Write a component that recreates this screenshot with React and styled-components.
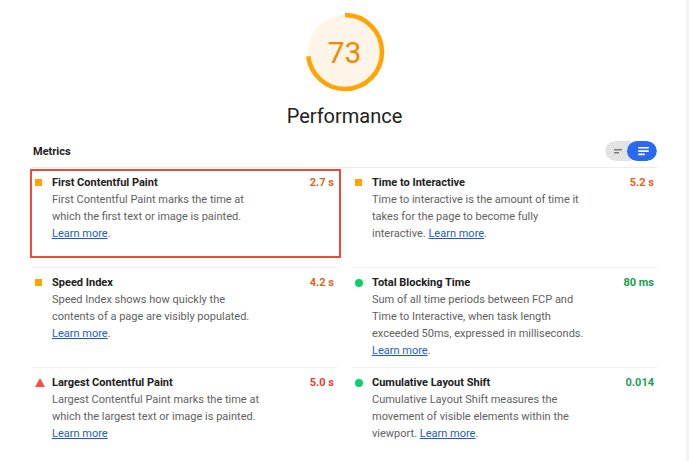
import React from "react";
import styled, { createGlobalStyle } from "styled-components";

const GlobalStyle = createGlobalStyle`
  html, body {
    margin: 0;
    padding: 0;
    background: #fff;
  }
  body {
    font-family: Roboto, "Liberation Sans", Arial, sans-serif;
    color: #212121;
    -webkit-font-smoothing: antialiased;
  }
`;

const metrics = [
  {
    id: "fcp",
    title: "First Contentful Paint",
    value: "2.7 s",
    rating: "average",
    text: "First Contentful Paint marks the time at which the first text or image is painted.",
    dot: true,
    highlight: true,
  },
  {
    id: "tti",
    title: "Time to Interactive",
    value: "5.2 s",
    rating: "average",
    text: "Time to interactive is the amount of time it takes for the page to become fully interactive.",
    dot: true,
  },
  {
    id: "si",
    title: "Speed Index",
    value: "4.2 s",
    rating: "average",
    text: "Speed Index shows how quickly the contents of a page are visibly populated.",
    dot: true,
  },
  {
    id: "tbt",
    title: "Total Blocking Time",
    value: "80 ms",
    rating: "pass",
    text: "Sum of all time periods between FCP and Time to Interactive, when task length exceeded 50ms, expressed in milliseconds.",
    dot: true,
  },
  {
    id: "lcp",
    title: "Largest Contentful Paint",
    value: "5.0 s",
    rating: "fail",
    text: "Largest Contentful Paint marks the time at which the largest text or image is painted.",
    dot: false,
  },
  {
    id: "cls",
    title: "Cumulative Layout Shift",
    value: "0.014",
    rating: "pass",
    text: "Cumulative Layout Shift measures the movement of visible elements within the viewport.",
    dot: true,
  },
];

const valueColors = {
  average: "#e2621b",
  pass: "#1a9e50",
  fail: "#eb3b2f",
};

function Gauge({ score }) {
  const r = 37;
  const c = 2 * Math.PI * r;
  return (
    <GaugeWrap>
      <svg width="80" height="80" viewBox="0 0 80 80">
        <circle cx="40" cy="40" r={r} fill="#fff4e8" />
        <circle
          cx="40"
          cy="40"
          r={r}
          fill="none"
          stroke="#ffa400"
          strokeWidth="4.5"
          strokeDasharray={`${(c * score) / 100} ${c}`}
          transform="rotate(-90 40 40)"
        />
      </svg>
      <GaugeScore>{score}</GaugeScore>
    </GaugeWrap>
  );
}

function RatingIcon({ rating }) {
  if (rating === "pass") return <Dot />;
  if (rating === "fail")
    return (
      <svg width="10" height="9" viewBox="0 0 10 9">
        <polygon points="5,0 10,9 0,9" fill="#ff4e42" />
      </svg>
    );
  return <Square />;
}

function ViewToggle() {
  return (
    <Toggle>
      <ToggleHalf>
        <svg width="12" height="8" viewBox="0 0 12 8">
          <rect x="2" y="2" width="8" height="1.4" fill="#777" />
          <rect x="2" y="5" width="5" height="1.4" fill="#777" />
        </svg>
      </ToggleHalf>
      <ToggleHalf active>
        <svg width="14" height="10" viewBox="0 0 14 10">
          <rect x="1" y="1" width="11" height="1.6" rx="0.8" fill="#fff" />
          <rect x="1" y="4.3" width="11" height="1.6" rx="0.8" fill="#fff" />
          <rect x="1" y="7.6" width="7" height="1.6" rx="0.8" fill="#fff" />
        </svg>
      </ToggleHalf>
    </Toggle>
  );
}

export default function App() {
  return (
    <Page>
      <GlobalStyle />
      <Header>
        <Gauge score={73} />
        <Category>Performance</Category>
      </Header>
      <Metrics>
        <MetricsHeader>
          <MetricsLabel>Metrics</MetricsLabel>
          <ViewToggle />
        </MetricsHeader>
        <Grid>
          {metrics.map((m) => (
            <Cell key={m.id} highlight={m.highlight}>
              <IconSlot>
                <RatingIcon rating={m.rating} />
              </IconSlot>
              <Body>
                <Title>{m.title}</Title>
                <Desc>
                  {m.text} <Link href="#">Learn more</Link>
                  {m.dot ? "." : ""}
                </Desc>
              </Body>
              <Value rating={m.rating}>{m.value}</Value>
            </Cell>
          ))}
        </Grid>
      </Metrics>
    </Page>
  );
}

const Page = styled.div`
  width: 686px;
  min-height: 461px;
  border-right: 3px solid #f3f3f3;
  overflow: hidden;
`;

const Header = styled.div`
  display: flex;
  flex-direction: column;
  align-items: center;
  padding-top: 12px;
`;

const GaugeWrap = styled.div`
  position: relative;
  width: 80px;
  height: 80px;
  margin-left: 3px;
`;

const GaugeScore = styled.div`
  position: absolute;
  inset: 0;
  display: flex;
  align-items: center;
  justify-content: center;
  font-size: 30px;
  font-weight: 400;
  color: #ef8a00;
`;

const Category = styled.div`
  margin-top: 12px;
  font-size: 20px;
  line-height: 24px;
  color: #212121;
  margin-left: 3px;
`;

const Metrics = styled.div`
  margin: 13px 29px 0 32px;
`;

const MetricsHeader = styled.div`
  display: flex;
  align-items: center;
  justify-content: space-between;
  height: 20px;
  padding-bottom: 6px;
  border-bottom: 1px solid #ececec;
`;

const MetricsLabel = styled.div`
  font-size: 11px;
  font-weight: 700;
  color: #212121;
  padding-left: 1px;
`;

const Toggle = styled.div`
  display: flex;
  height: 20px;
  border-radius: 10px;
  overflow: hidden;
`;

const ToggleHalf = styled.div`
  width: 26px;
  display: flex;
  align-items: center;
  justify-content: center;
  background: ${(p) => (p.active ? "#2a6af0" : "#e3e3e3")};
  border-radius: ${(p) => (p.active ? "10px" : "10px 0 0 10px")};
  margin-left: ${(p) => (p.active ? "-4px" : "0")};
  padding-left: ${(p) => (p.active ? "4px" : "0")};
`;

const Grid = styled.div`
  display: grid;
  grid-template-columns: 1fr 1fr;
  grid-auto-rows: 1fr;
  column-gap: 15px;
`;

const Cell = styled.div`
  position: relative;
  display: flex;
  align-items: flex-start;
  padding: 6px 3px 8px 3px;
  border-bottom: 1px solid #f0f0f0;

  &::after {
    content: "";
    display: ${(p) => (p.highlight ? "block" : "none")};
    position: absolute;
    top: 1px;
    bottom: 9px;
    left: -2px;
    right: -4px;
    border: 2px solid #ec4b37;
  }
`;

const IconSlot = styled.div`
  width: 17px;
  height: 17px;
  flex: none;
  display: flex;
  align-items: center;
`;

const Square = styled.span`
  width: 7px;
  height: 7px;
  background: #ffa400;
`;

const Dot = styled.span`
  width: 8px;
  height: 8px;
  border-radius: 50%;
  background: #0cce6b;
`;

const Body = styled.div`
  flex: 1;
  min-width: 0;
`;

const Title = styled.div`
  font-size: 11px;
  line-height: 17px;
  font-weight: 700;
  color: #212121;
`;

const Desc = styled.div`
  max-width: 218px;
  font-size: 11px;
  line-height: 17px;
  color: #616161;
`;

const Link = styled.a`
  color: #1a5ccc;
  text-decoration: underline;
`;

const Value = styled.div`
  flex: none;
  font-size: 11px;
  line-height: 17px;
  font-weight: 700;
  color: ${(p) => valueColors[p.rating]};
`;
